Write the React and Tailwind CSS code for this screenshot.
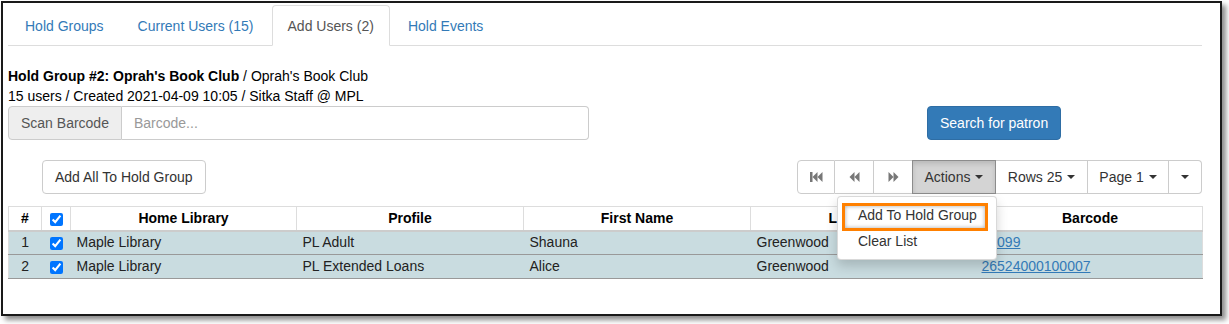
import React from "react";

const tabs = [
  { label: "Hold Groups", active: false },
  { label: "Current Users (15)", active: false },
  { label: "Add Users (2)", active: true },
  { label: "Hold Events", active: false },
];

const rows = [
  { n: 1, lib: "Maple Library", profile: "PL Adult", first: "Shauna", last: "Greenwood", barcode: "10099" },
  { n: 2, lib: "Maple Library", profile: "PL Extended Loans", first: "Alice", last: "Greenwood", barcode: "26524000100007" },
];

const Caret = () => (
  <span className="inline-block ml-[5px] align-middle w-0 h-0 border-x-[4px] border-x-transparent border-t-[4px] border-t-[#333]" />
);

const FastBackward = () => (
  <svg width="13" height="10" viewBox="0 0 13 10" fill="#777">
    <rect x="0" y="0" width="2.5" height="10" />
    <polygon points="2.5,5 7.5,0 7.5,10" />
    <polygon points="7.5,5 12.5,0 12.5,10" />
  </svg>
);

const Backward = () => (
  <svg width="11" height="10" viewBox="0 0 11 10" fill="#777">
    <polygon points="0.5,5 5.5,0 5.5,10" />
    <polygon points="5.5,5 10.5,0 10.5,10" />
  </svg>
);

const Forward = () => (
  <svg width="11" height="10" viewBox="0 0 11 10" fill="#777">
    <polygon points="10.5,5 5.5,0 5.5,10" />
    <polygon points="5.5,5 0.5,0 0.5,10" />
  </svg>
);

const Check = () => (
  <input type="checkbox" defaultChecked className="w-[13px] h-[13px] align-middle m-0" />
);

export default function App() {
  return (
    <div className="bg-white w-[1229px] h-[324px] font-['Liberation_Sans',Arial,sans-serif] text-[14px] text-[#333]">
      <div className="relative ml-[1px] mt-[1px] w-[1221px] h-[315px] border-2 border-[#1a1a1a] shadow-[4px_4px_5px_rgba(0,0,0,0.45)] pl-[5px] pr-[18px]">
        {/* tabs */}
        <ul className="flex mt-[2px] border-b border-[#ddd] h-[41px] pl-[1px]">
          {tabs.map((t) => (
            <li key={t.label} className="mr-[2px] -mb-[1px]">
              {t.active ? (
                <span className="block h-[41px] px-[15px] leading-[40px] text-[#555] bg-white border border-[#ddd] border-b-white rounded-t-[4px]">
                  {t.label}
                </span>
              ) : (
                <span className="block h-[41px] px-[15px] leading-[40px] text-[#337ab7] border border-transparent">
                  {t.label}
                </span>
              )}
            </li>
          ))}
        </ul>

        {/* group info */}
        <div className="mt-[20px] text-[14px] leading-[20px] text-black">
          <div>
            <span className="font-bold">Hold Group #2: Oprah's Book Club</span> / Oprah's Book Club
          </div>
          <div>15 users / Created 2021-04-09 10:05 / Sitka Staff @ MPL</div>
        </div>

        {/* barcode + search */}
        <div className="flex items-center">
          <div className="flex w-[581px] h-[34px]">
            <span className="flex items-center px-[12px] bg-[#eee] border border-[#ccc] rounded-l-[4px] text-[#555]">
              Scan Barcode
            </span>
            <div className="flex-1 flex items-center px-[12px] border border-l-0 border-[#ccc] rounded-r-[4px] text-[#999]">
              Barcode...
            </div>
          </div>
          <button className="ml-[338px] h-[34px] px-[12px] bg-[#337ab7] border border-[#2e6da4] rounded-[4px] text-white">
            Search for patron
          </button>
        </div>

        {/* toolbar */}
        <div className="flex items-center justify-between mt-[20px]">
          <button className="ml-[34px] h-[34px] px-[12px] bg-white border border-[#ccc] rounded-[4px] text-[#333]">
            Add All To Hold Group
          </button>
          <div className="relative flex h-[34px]">
            <span className="flex items-center justify-center w-[38px] border border-[#ccc] rounded-l-[4px]">
              <FastBackward />
            </span>
            <span className="flex items-center justify-center w-[39px] border border-l-0 border-[#ccc]">
              <Backward />
            </span>
            <span className="flex items-center justify-center w-[39px] border border-l-0 border-[#ccc]">
              <Forward />
            </span>
            <span className="flex items-center justify-center w-[83px] border border-l-0 border-[#8c8c8c] bg-[#d4d4d4] shadow-[inset_0_3px_5px_rgba(0,0,0,0.125),-1px_0_0_#8c8c8c]">
              Actions
              <Caret />
            </span>
            <span className="flex items-center justify-center w-[92px] border border-l-0 border-[#ccc]">
              Rows 25
              <Caret />
            </span>
            <span className="flex items-center justify-center w-[81px] border border-l-0 border-[#ccc]">
              Page 1
              <Caret />
            </span>
            <span className="flex items-center justify-center w-[33px] border border-l-0 border-[#ccc] rounded-r-[4px]">
              <span className="inline-block w-0 h-0 border-x-[4px] border-x-transparent border-t-[4px] border-t-[#333]" />
            </span>

            {/* actions menu */}
            <div className="absolute z-10 top-[36px] left-[40px] w-[160px] py-[5px] bg-white border border-[rgba(0,0,0,0.15)] rounded-[4px] shadow-[0_6px_12px_rgba(0,0,0,0.175)]">
              <div className="relative h-[26px] leading-[26px] pl-[20px] text-[#333]">
                <span className="absolute left-[4px] top-[1px] w-[146px] h-[28px] border-[3px] border-[#ff8000] shadow-[inset_0_0_4px_rgba(0,0,0,0.35)]" />
                Add To Hold Group
              </div>
              <div className="h-[26px] leading-[26px] pl-[20px] text-[#333]">Clear List</div>
            </div>
          </div>
        </div>

        {/* table */}
        <table className="mt-[12px] w-[1194px] table-fixed border-collapse border border-[#ddd]">
          <colgroup>
            <col className="w-[33px]" />
            <col className="w-[29px]" />
            <col className="w-[226px]" />
            <col className="w-[227px]" />
            <col className="w-[227px]" />
            <col className="w-[227px]" />
            <col className="w-[225px]" />
          </colgroup>
          <thead>
            <tr className="h-[24px] border-b-2 border-[#ccc] text-black">
              <th className="border-r border-[#ddd] font-bold text-center">#</th>
              <th className="border-r border-[#ddd] text-center leading-none">
                <Check />
              </th>
              <th className="border-r border-[#ddd] font-bold text-center">Home Library</th>
              <th className="border-r border-[#ddd] font-bold text-center">Profile</th>
              <th className="border-r border-[#ddd] font-bold text-center">First Name</th>
              <th className="border-r border-[#ddd] font-bold text-center">Last Name</th>
              <th className="font-bold text-center">Barcode</th>
            </tr>
          </thead>
          <tbody>
            {rows.map((r) => (
              <tr key={r.n} className="h-[24px] bg-[#c9dce0] border-b border-[#999] text-[#222]">
                <td className="text-center">{r.n}</td>
                <td className="text-center leading-none">
                  <Check />
                </td>
                <td className="pl-[6px]">{r.lib}</td>
                <td className="pl-[6px]">{r.profile}</td>
                <td className="pl-[6px]">{r.first}</td>
                <td className="pl-[6px]">{r.last}</td>
                <td className="pl-[4px]">
                  <span className="text-[#337ab7] underline">{r.barcode}</span>
                </td>
              </tr>
            ))}
          </tbody>
        </table>
      </div>
    </div>
  );
}
